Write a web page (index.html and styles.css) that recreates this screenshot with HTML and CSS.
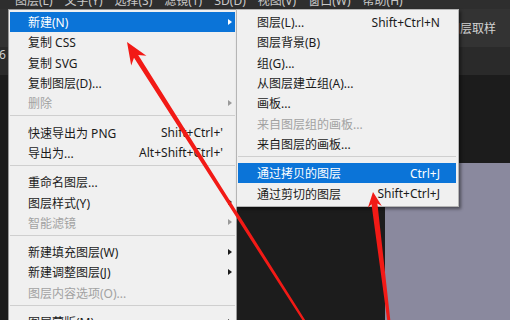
FILE: index.html
```html
<!DOCTYPE html>
<html lang="zh-CN">
<head>
    <meta charset="UTF-8">
    <title>图层菜单</title>
    <link rel="stylesheet" href="styles.css">
</head>
<body>
    <div class="app">
        <div class="menubar">
            <span>图层(L)</span>
            <span>文字(Y)</span>
            <span>选择(S)</span>
            <span>滤镜(T)</span>
            <span>3D(D)</span>
            <span>视图(V)</span>
            <span>窗口(W)</span>
            <span>帮助(H)</span>
        </div>
        <div class="options">
            <div class="sample-wrap"><span class="sample">对所有图层取样</span></div>
        </div>
        <div class="tabs">
            <span class="tab-title">6</span>
        </div>
        <div class="workspace">
            <div class="doc"></div>
        </div>
    </div>

    <div class="menu main-menu">
        <div class="item active"><span class="label">新建(N)</span><span class="sub"></span></div>
        <div class="item"><span class="label">复制 CSS</span><span class="sub none"></span></div>
        <div class="item"><span class="label">复制 SVG</span><span class="sub none"></span></div>
        <div class="item"><span class="label">复制图层(D)...</span><span class="sub none"></span></div>
        <div class="item disabled"><span class="label">删除</span><span class="sub"></span></div>
        <div class="sep"></div>
        <div class="item"><span class="label">快速导出为 PNG</span><span class="key">Shift+Ctrl+'</span><span class="sub none"></span></div>
        <div class="item"><span class="label">导出为...</span><span class="key">Alt+Shift+Ctrl+'</span><span class="sub none"></span></div>
        <div class="sep"></div>
        <div class="item"><span class="label">重命名图层...</span><span class="sub none"></span></div>
        <div class="item"><span class="label">图层样式(Y)</span><span class="sub"></span></div>
        <div class="item disabled"><span class="label">智能滤镜</span><span class="sub"></span></div>
        <div class="sep"></div>
        <div class="item"><span class="label">新建填充图层(W)</span><span class="sub"></span></div>
        <div class="item"><span class="label">新建调整图层(J)</span><span class="sub"></span></div>
        <div class="item disabled"><span class="label">图层内容选项(O)...</span><span class="sub none"></span></div>
        <div class="sep"></div>
        <div class="item"><span class="label">图层蒙版(M)</span><span class="sub"></span></div>
    </div>

    <div class="menu sub-menu">
        <div class="item"><span class="label">图层(L)...</span><span class="key">Shift+Ctrl+N</span></div>
        <div class="item"><span class="label">图层背景(B)</span></div>
        <div class="item"><span class="label">组(G)...</span></div>
        <div class="item"><span class="label">从图层建立组(A)...</span></div>
        <div class="item"><span class="label">画板...</span></div>
        <div class="item disabled"><span class="label">来自图层组的画板...</span></div>
        <div class="item"><span class="label">来自图层的画板...</span></div>
        <div class="sep"></div>
        <div class="item active"><span class="label">通过拷贝的图层</span><span class="key">Ctrl+J</span></div>
        <div class="item"><span class="label">通过剪切的图层</span><span class="key">Shift+Ctrl+J</span></div>
    </div>

    <!-- annotation arrows -->
    <svg class="arrows" width="510" height="320" viewBox="0 0 510 320">
        <polygon fill="#f21a16" points="127,42 146.4,55.7 138.2,55 306,321.4 304,322.6 134,57.7 131.2,65.4"/>
        <polygon fill="#f21a16" points="373,192 381.8,206 377.4,203.5 390.5,321.8 387.5,322.2 371.5,204.3 367.9,207.7"/>
    </svg>
</body>
</html>
```

FILE: styles.css
```css
body {
    margin: 0;
    width: 510px;
    height: 320px;
    overflow: hidden;
    position: relative;
    background: #1c1c1c;
    font-family: "Noto Sans", "Noto Sans CJK SC", sans-serif;
    font-size: 12px;
}
.app {
    display: flex;
    flex-direction: column;
    height: 320px;
}
.menubar {
    height: 9px;
    overflow: hidden;
    background: #2e2e2e;
    color: #c8c8c8;
    display: flex;
    gap: 12px;
    padding-left: 15px;
}
.menubar span {
    line-height: 16px;
    margin-top: -7px;
}
.options {
    height: 38px;
    background: #333333;
    color: #d2d2d2;
    display: flex;
    align-items: center;
    padding: 0 14px 0 458px;
}
.sample-wrap {
    flex: 1;
    overflow: hidden;
    display: flex;
    justify-content: flex-end;
    white-space: nowrap;
}
.tabs {
    height: 28px;
    background: #2a2a2a;
    color: #cfcfcf;
    padding-top: 1px;
    box-sizing: border-box;
}
.tab-title {
    display: block;
    line-height: 14px;
    margin-left: -1px;
}
.workspace {
    flex: 1;
    padding: 88px 0 0 385px;
}
.doc {
    height: 100%;
    background: #8a899e;
}

.menu {
    position: absolute;
    top: 9px;
    background: #f0f0f0;
    border: 1px solid #9a9a9a;
    padding: 2px 1px;
    color: #1b1b1b;
}
.main-menu {
    left: 8px;
    width: 225px;
}
.sub-menu {
    left: 236px;
    width: 218px;
    padding-right: 2px;
    border-color: #b5b5b5;
    box-shadow: 2px 2px 3px rgba(0, 0, 0, 0.45);
}
.item {
    height: 20.3px;
    display: flex;
    align-items: center;
    white-space: nowrap;
}
.main-menu .item {
    padding-left: 18px;
}
.sub-menu .item {
    padding-left: 19px;
    padding-right: 15px;
}
.label {
    flex: 1;
}
.key {
    margin-right: 1px;
}
.item.active {
    background: #0b74d8;
    color: #ffffff;
}
.item.disabled {
    color: #a2a2a2;
}
.sub {
    width: 11px;
    height: 7px;
    position: relative;
}
.sub::after {
    content: "";
    position: absolute;
    left: 4px;
    top: 0;
    border-left: 4px solid #1b1b1b;
    border-top: 3.5px solid transparent;
    border-bottom: 3.5px solid transparent;
}
.item.active .sub::after {
    border-left-color: #ffffff;
}
.item.disabled .sub::after {
    border-left-color: #9a9a9a;
}
.sub.none::after {
    display: none;
}
.sep {
    height: 9px;
    box-sizing: border-box;
    padding-top: 2px;
}
.sep::before {
    content: "";
    display: block;
    height: 1px;
    background: #cfcfcf;
}
.arrows {
    position: absolute;
    top: 0;
    left: 0;
    pointer-events: none;
}
```
